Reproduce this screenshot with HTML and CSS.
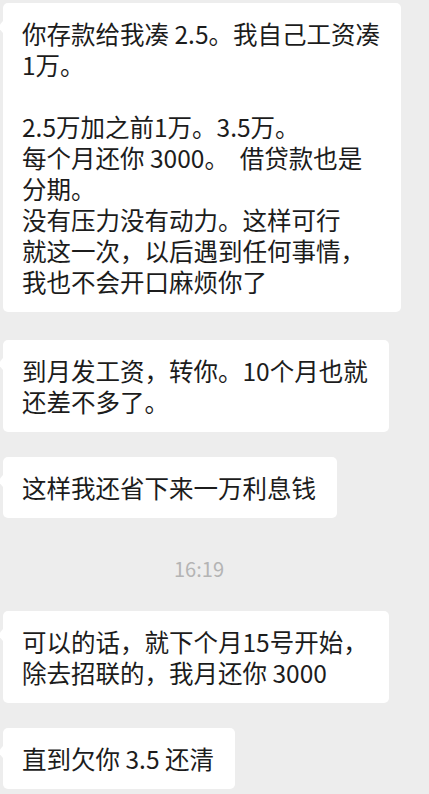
FILE: index.html
```html
<!DOCTYPE html>
<html lang="zh-CN">
<head>
  <meta charset="UTF-8" />
  <meta name="viewport" content="width=device-width, initial-scale=1.0"/>
  <title>聊天记录</title>
  <link rel="stylesheet" href="styles.css">
</head>
<body>
  <div class="chat">
    <div class="bubble first">
      你存款给我凑 2.5。我自己工资凑<br>1万。<br><br>
      2.5万加之前1万。3.5万。<br>
      每个月还你 3000。&nbsp;&nbsp;借贷款也是<br>分期。<br>
      没有压力没有动力。这样可行<br>
      就这一次，以后遇到任何事情，<br>
      我也不会开口麻烦你了
    </div>

    <div class="bubble">
      到月发工资，转你。10个月也就<br>还差不多了。
    </div>

    <div class="bubble">这样我还省下来一万利息钱</div>

    <div class="time">16:19</div>

    <div class="bubble">
      可以的话，就下个月15号开始，<br>除去招联的，我月还你 3000
    </div>

    <div class="bubble">直到欠你 3.5 还清</div>
  </div>
</body>
</html>
```

FILE: styles.css
```css
body {
  margin: 0;
  background: #ededed;
  font-family: "Noto Sans CJK SC", sans-serif;
  color: #1c1c1c;
}

.chat {
  display: flex;
  flex-direction: column;
  align-items: flex-start;
  gap: 25px;
  padding: 3px 0 0 3px;
}

.bubble {
  position: relative;
  background: #fff;
  border-radius: 5px;
  padding: 15px 21px 15px 19px;
  font-size: 24.5px;
  line-height: 31px;
  white-space: nowrap;
}

.bubble.first {
  margin-bottom: 3px;
}

.bubble::before {
  content: "";
  position: absolute;
  left: -5px;
  top: 18px;
  border-top: 6px solid transparent;
  border-bottom: 6px solid transparent;
  border-right: 5px solid #fff;
}

.time {
  align-self: center;
  margin: 14px 34px 5px 0;
  font-size: 20px;
  line-height: 24px;
  color: #b4b4b4;
}
```
